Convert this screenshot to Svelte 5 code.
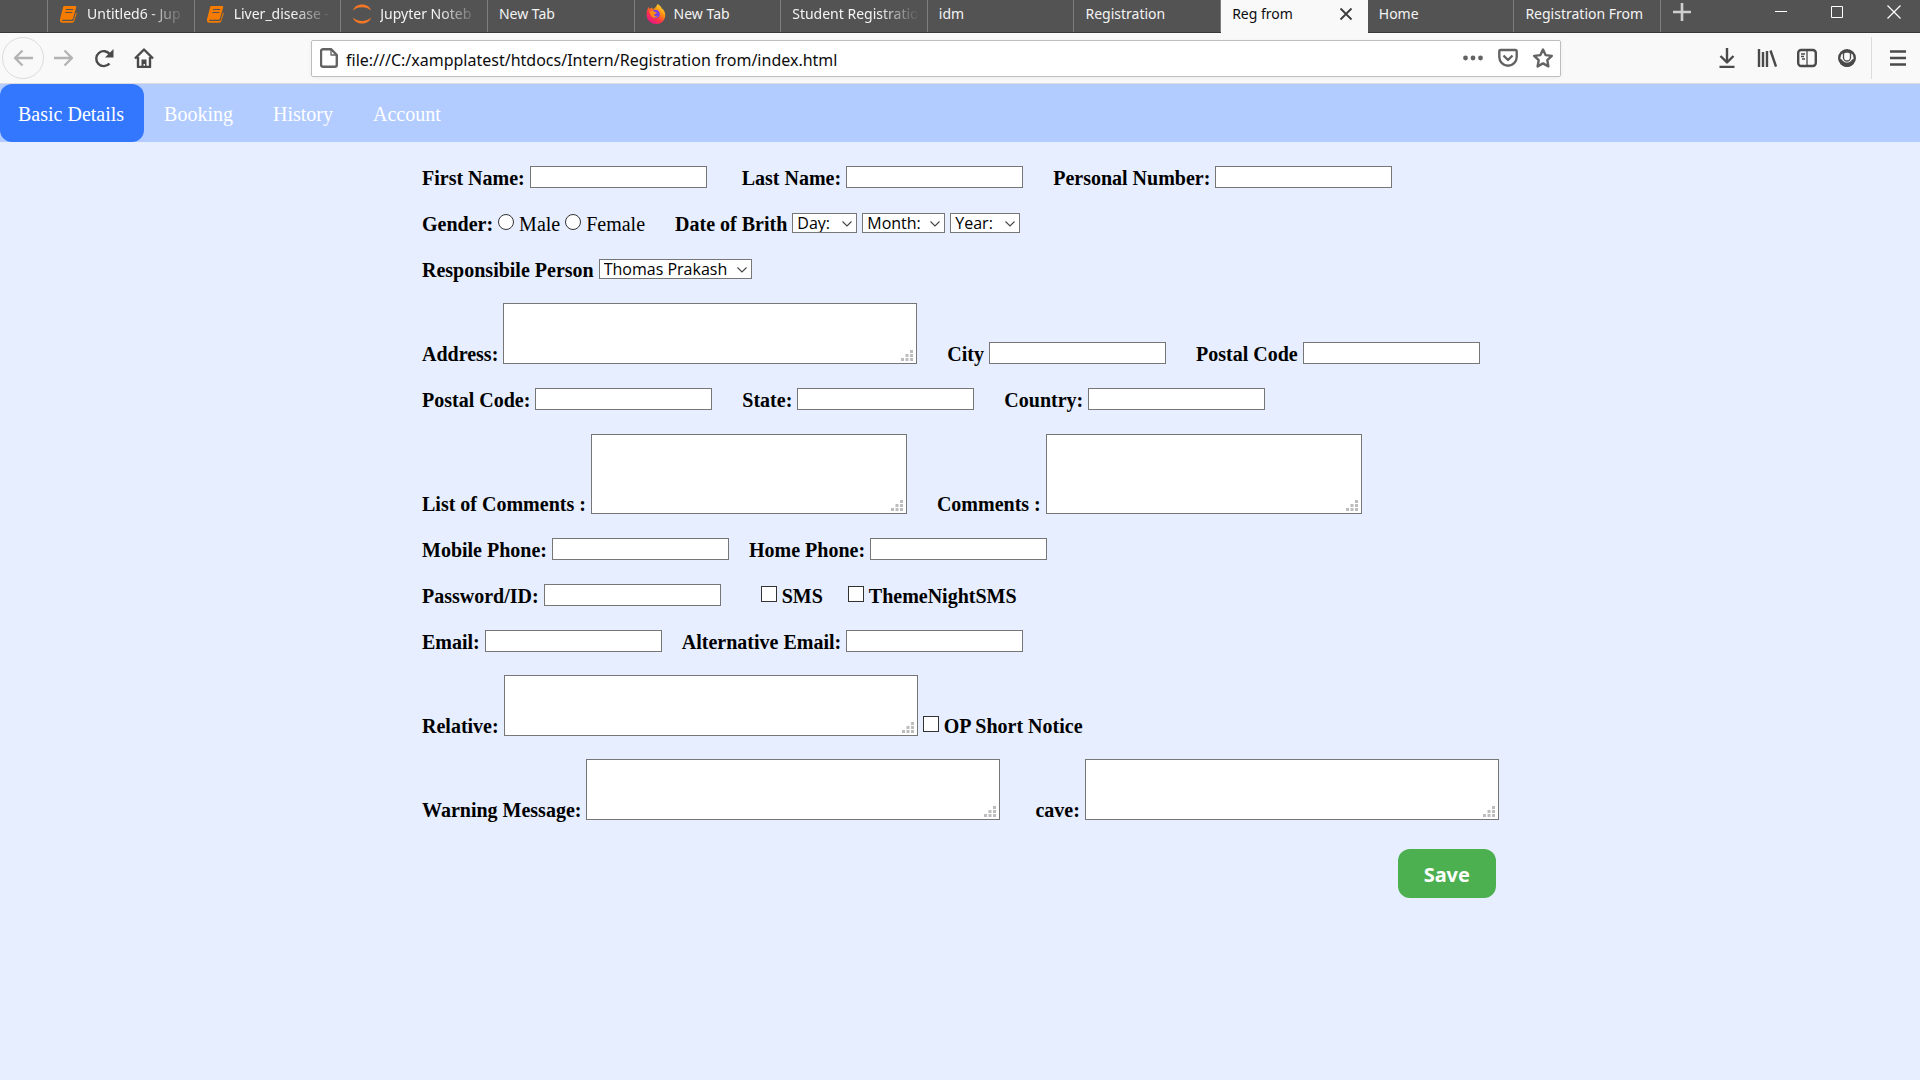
<script>
  const tabs = [
    { title: 'Untitled6 - Jup', icon: 'book', fade: true },
    { title: 'Liver_disease -', icon: 'book', fade: true },
    { title: 'Jupyter Noteb', icon: 'jupyter', fade: true },
    { title: 'New Tab' },
    { title: 'New Tab', icon: 'firefox' },
    { title: 'Student Registratio', fade: true },
    { title: 'idm' },
    { title: 'Registration' },
    { title: 'Reg from', active: true },
    { title: 'Home' },
    { title: 'Registration From' },
  ];
  const sections = ['Basic Details', 'Booking', 'History', 'Account'];
  let current = $state('Basic Details');
  let url = $state('file:///C:/xampplatest/htdocs/Intern/Registration from/index.html');
</script>

{#snippet text(id, label, gap = '')}
  <div class="field {gap}">
    <label for={id}>{label}</label>
    <input class="text" type="text" {id} />
  </div>
{/snippet}

{#snippet area(id, label, kind, gap = '')}
  <div class="field {gap}">
    <label for={id}>{label}</label>
    <span class="areabox {kind}">
      <textarea {id}></textarea>
      <svg class="grip" width="12" height="11" viewBox="0 0 12 11" aria-hidden="true">
        <path fill="#bdbdbd" d="M9 0h3v3H9zM9 4h3v3H9zM9 8h3v3H9zM4.500 4h3v3h-3zM4.500 8h3v3h-3zM0 8h3v3H0z" />
      </svg>
    </span>
  </div>
{/snippet}

{#snippet select(id, label, kind)}
  <span class="selectbox {kind}">
    <select {id} aria-label={label}><option>{label}</option></select>
    <svg class="chevron" width="10" height="6" viewBox="0 0 10 6" aria-hidden="true">
      <path d="M0.500 0.500L5 5L9.500 0.500" fill="none" stroke="#444" stroke-width="1.100" />
    </svg>
  </span>
{/snippet}

<div class="window">
  <header>
    <div class="tabstrip">
      <div class="tabs">
        {#each tabs as tab}
          <button class="tab" class:active={tab.active} class:iconed={tab.icon}>
            {#if tab.icon === 'book'}
              <svg width="20" height="20" viewBox="0 -1 20 20" aria-hidden="true">
                <path fill="#f57c00" d="M5.500 1h10.500c1 0 1.500.700 1.200 1.600L14 13.500c-.3.900-.8 1.300-1.700 1.300H3.800c-.9 0-1 1.200 0 1.200h9.500c.8 0 1.200-.4 1.500-1.200L17 7.500c.6.300.8.700.6 1.500l-2.300 7c-.4 1.200-1.100 1.700-2.200 1.700H3.500C1.500 17.700.5 16 1 14.200L4 2.500C4.200 1.500 4.700 1 5.500 1z" />
                <path stroke="#535353" d="M7 4.500h7M6.300 7.500h7" />
              </svg>
            {:else if tab.icon === 'jupyter'}
              <svg width="20" height="20" viewBox="0 0 20 20" aria-hidden="true">
                <path fill="#f37726" d="M1 6.500C3 -1.500 17 -1.500 19 6.500C15 2 5 2 1 6.500zM1 13.500C3 21.500 17 21.500 19 13.500C15 18 5 18 1 13.500z" />
              </svg>
            {:else if tab.icon === 'firefox'}
              <svg width="20" height="20" viewBox="0 0 20 20" aria-hidden="true">
                <defs>
                  <linearGradient id="flame" x1="1" y1="0" x2="0.300" y2="1">
                    <stop offset="0" stop-color="#fff44f" />
                    <stop offset="0.400" stop-color="#ff980e" />
                    <stop offset="0.700" stop-color="#ff3647" />
                    <stop offset="1" stop-color="#e31587" />
                  </linearGradient>
                </defs>
                <path fill="url(#flame)" d="M11.500 0c3 1.500 4 3.500 4.300 4.500 1 .2 2.500 2 3.200 4.500 1.300 6-3 11-9 11S-.2 15 .6 9.500C.8 7 1.500 5 2.500 3l1.300 2L6 3.500l1 2C9 4 10.500 2.500 11.500 0z" />
                <circle cx="9.500" cy="10" r="4.300" fill="#7542e5" />
                <path fill="#ff8a16" d="M3.500 7.500c2-1.500 4-.8 5.500.5l2 .5c-.5 1.500-2.500 1-3 2.500.5 1.500 2 1.500 3.500 1-1.500 3-7 2.500-8-4.500z" />
              </svg>
            {/if}
            <span class="title" class:fade={tab.fade}>{tab.title}</span>
            {#if tab.active}
              <svg class="close" width="14" height="14" viewBox="0 0 14 14" aria-hidden="true">
                <path d="M1.500 1.500l11 11M12.500 1.500l-11 11" stroke="#3c3c3c" stroke-width="1.800" fill="none" />
              </svg>
            {/if}
          </button>
        {/each}
      </div>
      <button class="newtab" aria-label="Open a new tab">
        <svg width="18" height="18" viewBox="0 0 18 18"><path d="M9 0v18M0 9h18" stroke="#cfcfcf" stroke-width="2.600" /></svg>
      </button>
      <div class="controls">
        <button aria-label="Minimize"><svg width="12" height="12" viewBox="0 0 12 12"><path d="M0 5.500h12" stroke="#fff" /></svg></button>
        <button aria-label="Maximize"><svg width="12" height="12" viewBox="0 0 12 12"><path d="M.5.500h11v11H.5z" stroke="#fff" fill="none" /></svg></button>
        <button aria-label="Close"><svg width="14" height="14" viewBox="0 0 14 14"><path d="M.5.500l13 13M13.500.500l-13 13" stroke="#fff" stroke-width="1.200" /></svg></button>
      </div>
    </div>

    <div class="toolbar">
      <div class="navigation">
        <button class="back" aria-label="Back">
          <svg width="20" height="18" viewBox="0 0 20 18"><path d="M9.500 1.500L2 9l7.500 7.500M2 9h18" /></svg>
        </button>
        <button class="forward" aria-label="Forward">
          <svg width="20" height="18" viewBox="0 0 20 18"><path d="M10.500 1.500L18 9l-7.500 7.500M18 9H0" /></svg>
        </button>
        <button aria-label="Reload">
          <svg width="20" height="20" viewBox="0 0 20 20"><path d="M15.500 15.500A7.500 7.500 0 1 1 16 6.500" /><path class="solid" d="M19.500 1v8.500h-8.500z" /></svg>
        </button>
        <button aria-label="Home">
          <svg width="20" height="20" viewBox="0 0 20 20"><path d="M1 10.500L10 1.500l9 9M4 9v10h12V9" /><path class="solid" d="M7.500 19v-7.500h5V19h-1.500v-3h-1.500v3z" /></svg>
        </button>
      </div>
      <div class="address">
        <svg width="18" height="20" viewBox="0 0 18 20" aria-hidden="true"><path d="M3 1.200h8l5.800 5.800v9.800a2 2 0 0 1-2 2H3a2 2 0 0 1-2-2V3.200a2 2 0 0 1 2-2z" /><path class="thin" d="M11 1.500V7h5.500" /></svg>
        <input type="text" aria-label="Address" bind:value={url} />
        <button aria-label="Page actions">
          <svg width="20" height="20" viewBox="0 0 20 20"><g class="solid"><circle cx="2.500" cy="10" r="2.400" /><circle cx="10" cy="10" r="2.400" /><circle cx="17.500" cy="10" r="2.400" /></g></svg>
        </button>
        <button aria-label="Save to Pocket">
          <svg width="20" height="20" viewBox="0 0 20 20"><path d="M2.500 2h15a1.200 1.200 0 0 1 1.200 1.200V9a8.700 8.700 0 0 1-17.400 0V3.200A1.200 1.200 0 0 1 2.500 2zM5.500 7.500L10 12l4.500-4.500" /></svg>
        </button>
        <button aria-label="Bookmark this page">
          <svg width="20" height="20" viewBox="0 0 20 20"><path d="M10 1.500l2.600 5.600 6.200.8-4.500 4.300 1.100 6.200L10 15.400l-5.400 3 1.100-6.200L1.200 7.900l6.200-.8z" /></svg>
        </button>
      </div>
      <div class="tools">
        <button aria-label="Downloads">
          <svg width="20" height="20" viewBox="0 0 20 20"><path d="M10 0v14M3.500 8l6.500 6.500L16.500 8M2.500 19h15" /></svg>
        </button>
        <button aria-label="Library">
          <svg width="20" height="20" viewBox="0 0 20 20"><path d="M2 1v18M6 4v15M10 3v16M13.500 2.500l5.500 16" /></svg>
        </button>
        <button aria-label="Sidebars">
          <svg width="20" height="20" viewBox="0 0 20 20"><rect x="1.200" y="2" width="17.600" height="16" rx="3" /><path class="thin" d="M10 2v16M4 6h4M4 8.500h3M5 11h3" /></svg>
        </button>
        <button aria-label="Account">
          <svg width="20" height="20" viewBox="0 0 20 20"><circle cx="10" cy="10" r="7.800" /><path class="solid" d="M2.500 11C5 10.500 5.500 13 7.500 14c1.500.8 3.500.8 5 0 2-1 2.500-3.500 5-3l-1 5c-4 4-9 4-13 0zM4.500 4.500C8 1.500 12 1.500 15.500 4.500L14 6.500C12 4 8 4 6 6.500z" /><path class="thin" d="M6.500 6v3.500a3.500 3.500 0 0 0 7 0V6" /></svg>
        </button>
        <button class="menu" aria-label="Open menu">
          <svg width="16" height="16" viewBox="0 0 16 16"><path d="M0.500 1.500h15M0.500 8h15M0.500 14.500h15" stroke-linecap="round" /></svg>
        </button>
      </div>
    </div>
  </header>

  <nav>
    {#each sections as section}
      <a href="#{section}" class:current={current === section} onclick={() => (current = section)}>{section}</a>
    {/each}
  </nav>

  <form onsubmit={(event) => event.preventDefault()}>
    <div class="row">
      {@render text('first', 'First Name:')}
      {@render text('last', 'Last Name:', 'gap-35')}
      {@render text('personal', 'Personal Number:', 'gap-30')}
    </div>
    <div class="row">
      <div class="field" role="radiogroup" aria-labelledby="gender">
        <b id="gender">Gender:</b>
        <input type="radio" name="gender" id="male" /><label class="plain" for="male">Male</label>
        <input type="radio" name="gender" id="female" /><label class="plain" for="female">Female</label>
      </div>
      <div class="field gap-30">
        <label for="day">Date of Brith</label>
        {@render select('day', 'Day:', 'day')}
        {@render select('month', 'Month:', 'month')}
        {@render select('year', 'Year:', 'year')}
      </div>
    </div>
    <div class="row">
      <div class="field">
        <label for="person">Responsibile Person</label>
        {@render select('person', 'Thomas Prakash', 'person')}
      </div>
    </div>
    <div class="row">
      {@render area('address', 'Address:', 'wide')}
      {@render text('city', 'City', 'gap-30')}
      {@render text('postal', 'Postal Code', 'gap-30')}
    </div>
    <div class="row">
      {@render text('postal2', 'Postal Code:')}
      {@render text('state', 'State:', 'gap-30')}
      {@render text('country', 'Country:', 'gap-30')}
    </div>
    <div class="row">
      {@render area('list', 'List of Comments :', 'tall')}
      {@render area('comments', 'Comments :', 'tall', 'gap-30')}
    </div>
    <div class="row">
      {@render text('mobile', 'Mobile Phone:')}
      {@render text('home', 'Home Phone:', 'gap-20')}
    </div>
    <div class="row">
      {@render text('password', 'Password/ID:')}
      <div class="field gap-40"><input type="checkbox" id="sms" /><label for="sms">SMS</label></div>
      <div class="field gap-25"><input type="checkbox" id="night" /><label for="night">ThemeNightSMS</label></div>
    </div>
    <div class="row">
      {@render text('email', 'Email:')}
      {@render text('email2', 'Alternative Email:', 'gap-20')}
    </div>
    <div class="row">
      {@render area('relative', 'Relative:', 'wide')}
      <div class="field gap-5"><input type="checkbox" id="notice" /><label for="notice">OP Short Notice</label></div>
    </div>
    <div class="row">
      {@render area('warning', 'Warning Message:', 'wide')}
      {@render area('cave', 'cave:', 'wide', 'gap-35')}
    </div>
    <button class="save">Save</button>
  </form>
</div>

<style>
  :global(body) {
    background: #e6eeff;
  }
  .window {
    font-family: 'Liberation Serif', 'Times New Roman', serif;
    font-size: 20px;
    line-height: 20px;
    color: #000;
  }
  button {
    border: 0;
    padding: 0;
    background: none;
    font: inherit;
    color: inherit;
  }
  svg {
    display: block;
    flex: none;
  }
  header {
    font-family: 'Noto Sans', 'Open Sans', sans-serif;
  }

  /* Tab strip */
  .tabstrip {
    display: flex;
    height: 33px;
    box-sizing: border-box;
    padding-left: 47px;
    background: #535353;
    border-bottom: 1px solid #383838;
  }
  .tabs {
    display: flex;
    flex: 0 1 1613px;
    min-width: 0;
    border-left: 1px solid #7d7d7d;
  }
  .tab {
    display: flex;
    flex: 1 1 0;
    min-width: 0;
    box-sizing: border-box;
    align-items: center;
    gap: 8px;
    padding: 0 8px 4px 11px;
    border-right: 1px solid #7d7d7d;
    color: #f4f4f4;
    font-size: 14px;
    line-height: 20px;
    text-align: left;
  }
  .tab.iconed {
    padding-bottom: 5px;
  }
  .title {
    flex: 1;
    min-width: 0;
    overflow: hidden;
    white-space: nowrap;
  }
  .title.fade {
    mask-image: linear-gradient(to left, transparent, #000 40px);
  }
  .tab.active {
    height: 33px;
    padding-bottom: 5px;
    background: #f9f9fa;
    border-color: #f9f9fa;
    color: #0c0c0d;
  }
  .close {
    margin-right: 6px;
  }
  .newtab {
    padding: 0 12px 8px;
  }
  .controls {
    display: flex;
    margin-left: auto;
    padding-right: 19px;
    gap: 44px;
  }
  .controls button {
    padding-bottom: 8px;
  }

  /* Toolbar */
  .toolbar {
    display: flex;
    align-items: center;
    height: 51px;
    box-sizing: border-box;
    border-bottom: 1px solid #dcdce0;
    background: #f9f9fa;
  }
  .toolbar svg {
    fill: none;
    stroke: #4a4a4a;
    stroke-width: 2.4px;
    stroke-linejoin: round;
  }
  .toolbar .solid {
    fill: #4a4a4a;
    stroke: none;
  }
  .toolbar .thin {
    stroke-width: 1.3px;
  }
  .navigation {
    display: flex;
    flex: 0 0 311px;
    align-items: center;
    gap: 20px;
    padding-left: 2px;
    box-sizing: border-box;
  }
  .back {
    display: grid;
    place-items: center;
    width: 42px;
    height: 42px;
    border: 1px solid #dcdcdc;
    border-radius: 50%;
    margin-right: -10px;
  }
  .toolbar .back svg,
  .toolbar .forward svg {
    stroke: #b4b4b5;
  }
  .address {
    display: flex;
    flex: 1;
    min-width: 0;
    align-items: center;
    gap: 15px;
    height: 37px;
    box-sizing: border-box;
    padding: 0 7px 0 8px;
    border: 1px solid #bebebe;
    border-radius: 2px;
    background: #fff;
    box-shadow: 0 1px 4px #0000000d;
  }
  .address svg {
    stroke: #636363;
  }
  .address .solid {
    fill: #636363;
  }
  .address input {
    flex: 1;
    min-width: 0;
    margin-left: -7px;
    padding: 3px 0 0;
    border: 0;
    outline: 0;
    background: none;
    color: #0c0c0d;
    font: 16px/24px 'Noto Sans', 'Open Sans', sans-serif;
  }
  .tools {
    display: flex;
    flex: 0 0 359px;
    justify-content: flex-end;
    align-items: center;
    gap: 20px;
    padding-right: 14px;
    box-sizing: border-box;
  }
  .menu {
    padding: 13px 0 13px 18px;
    border-left: 1px solid #dcdce0;
    margin-left: -6px;
  }

  /* Page navigation */
  nav {
    display: flex;
    background: #b3ccff;
  }
  nav a {
    padding: 20px 20px 18px;
    border-radius: 12px;
    color: #fff;
    text-decoration: none;
  }
  nav a:first-child {
    padding-left: 18px;
  }
  nav a.current {
    background: #3377ff;
  }

  /* Registration form */
  form {
    display: flex;
    flex-direction: column;
    gap: 24px;
    max-width: 1076px;
    margin: 0 auto;
    padding: 24px 0;
  }
  .row,
  .field {
    display: flex;
    align-items: flex-end;
  }
  .row {
    min-height: 22px;
  }
  .field {
    gap: 5px;
  }
  .gap-5 {
    margin-left: 5px;
  }
  .gap-20 {
    margin-left: 20px;
  }
  .gap-25 {
    margin-left: 25px;
  }
  .gap-30 {
    margin-left: 30px;
  }
  .gap-35 {
    margin-left: 35px;
  }
  .gap-40 {
    margin-left: 40px;
  }
  .field label {
    font-weight: bold;
    white-space: nowrap;
  }
  .field label.plain {
    font-weight: normal;
  }
  .text,
  textarea,
  select {
    box-sizing: border-box;
    margin: 0;
    border: 1px solid #767676;
    border-radius: 0;
    background: #fff;
    color: #000;
    font: 16px/18px 'Open Sans', 'Noto Sans', sans-serif;
  }
  .text {
    width: 177px;
    height: 22px;
    padding: 1px 2px;
  }
  .areabox,
  .selectbox {
    display: block;
    position: relative;
  }
  textarea {
    display: block;
    width: 414px;
    height: 61px;
    resize: none;
  }
  .wide {
    margin-top: -1px;
  }
  .tall textarea {
    width: 316px;
    height: 80px;
  }
  .grip {
    position: absolute;
    right: 4px;
    bottom: 3px;
    pointer-events: none;
  }
  .selectbox {
    margin-bottom: 1px;
  }
  select {
    display: block;
    width: 100%;
    height: 20px;
    padding: 0 4px;
    appearance: none;
  }
  .day {
    width: 65px;
  }
  .month {
    width: 83px;
  }
  .year {
    width: 70px;
  }
  .person {
    width: 153px;
  }
  .chevron {
    position: absolute;
    right: 5px;
    top: 8px;
    pointer-events: none;
  }
  input[type='radio'],
  input[type='checkbox'] {
    appearance: none;
    width: 16px;
    height: 16px;
    box-sizing: border-box;
    margin: 0 0 4px;
    border: 1px solid #333;
    background: #fff;
  }
  input[type='radio'] {
    border-radius: 50%;
  }
  input:checked {
    box-shadow: inset 0 0 0 3px #fff;
    background: #333;
  }
  .save {
    align-self: flex-end;
    margin: 5px 2px 0 0;
    padding: 14px 26px 11px;
    border-radius: 12px;
    background: #4caf50;
    color: #fff;
    font: bold 20px/24px 'Noto Sans', 'Open Sans', sans-serif;
  }

  @media (max-width: 1100px) {
    form {
      padding: 24px 16px;
    }
    .row {
      flex-wrap: wrap;
      row-gap: 12px;
    }
  }
</style>
